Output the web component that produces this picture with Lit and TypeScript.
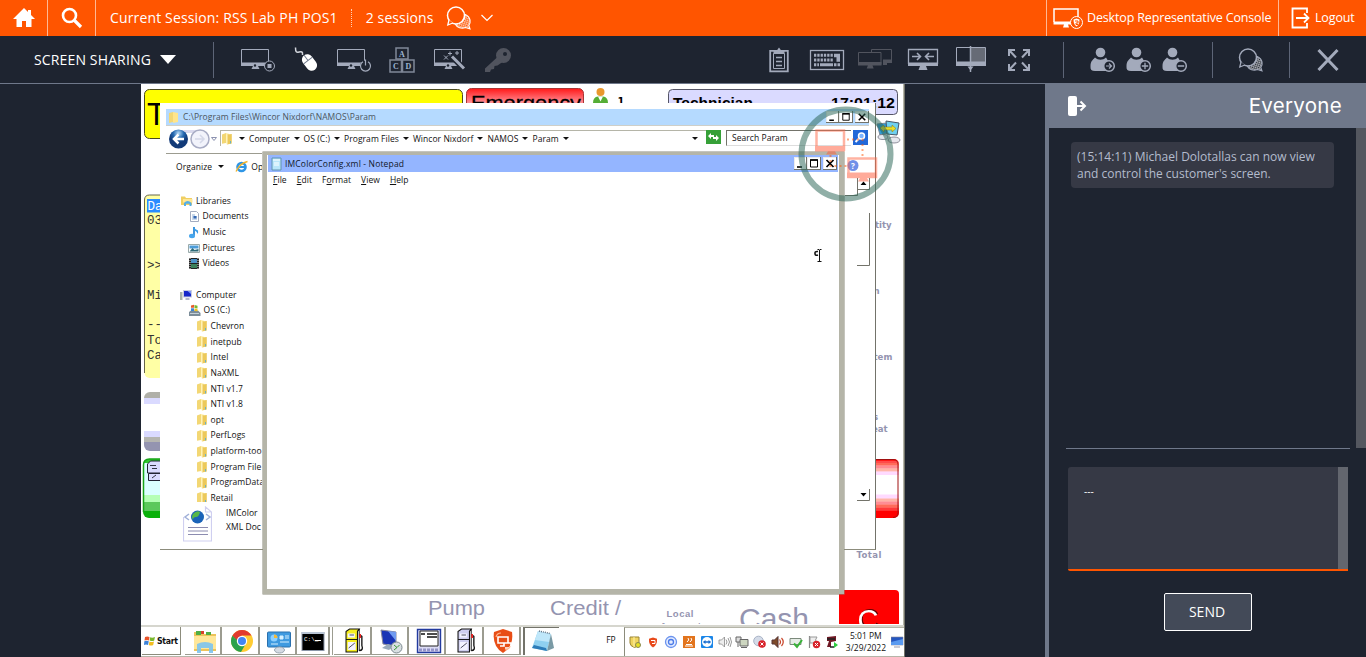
import { LitElement, html, svg, css } from "lit";
import { customElement } from "lit/decorators.js";

/* ---------- shared artwork ---------- */

const chat = svg`
  <circle cx="15" cy="11.500" r="8.500" fill="none" stroke="currentColor" stroke-width="1.500"/>
  <path d="M8 16l-1.200 5 5-2" fill="var(--bar)" stroke="currentColor" stroke-width="1.300"/>
  <path d="M24.300 10.500c6 3 5.500 8.500 3.500 11l1.200 3.500-4.500-1.500c-4 1.500-8.500 0-10-3 5-.5 9.500-4 9.800-10z" fill="var(--bar)"/>
  <path d="M24.300 10.500c6 3 5.500 8.500 3.500 11l1.200 3.500-4.500-1.500c-4 1.500-8.500 0-10-3 5-.5 9.500-4 9.800-10z" fill="url(#mesh)" stroke="currentColor" stroke-width="1.100"/>`;

const mesh = svg`<defs><pattern id="mesh" width="2" height="2" patternUnits="userSpaceOnUse" patternTransform="rotate(20)">
  <path d="M0 .5h2M.5 0v2" stroke="#fff" stroke-width=".6" opacity=".75"/></pattern></defs>`;

const monitor = svg`<path d="M1.500 18V3.500H28.500V18" fill="none" stroke="currentColor"/>
  <path d="M1 16.500h28v3.500H18l1.500 3h-8l1.500-3H1z" fill="currentColor"/>
  <circle cx="15" cy="19.500" r="1.200" fill="#1e2430"/>`;

const person = svg`<circle cx="13" cy="6.500" r="4.800" fill="currentColor"/>
  <path d="M7.500 11.500c3 3 8 3 11 0l3 5v8.500h-14q-5 0-4.500-4.500c0-5 2-6.500 4.500-9z" fill="currentColor"/>
  <circle cx="21.500" cy="20" r="5.300" fill="#1e2430" stroke="currentColor" stroke-width="1.500"/>`;

const icon = (art: unknown, cls = "") =>
  html`<svg class="ico ${cls}" width="36" height="28" viewBox="0 0 36 28">${mesh}${art}</svg>`;

const leftTools = [
  icon(svg`${monitor}<circle cx="29.500" cy="20" r="5" fill="#1e2430" stroke="currentColor"/><rect x="27.500" y="18" width="4" height="4" fill="currentColor"/>`),
  icon(svg`<path d="M7.500 1.500c0 5 1 5 3.500 4.500s4-.5 3.500 3" fill="none" stroke="#d3d6dd" stroke-width="1.500"/>
    <g transform="translate(1.500 -.5) rotate(-37 20 17)"><rect x="14.500" y="8" width="11" height="18" rx="5.500" fill="#fff"/><path d="M14.500 14.500h11M20 8v6.500" stroke="#6f788a"/></g>`),
  icon(svg`${monitor}<circle cx="29.500" cy="20" r="5.500" fill="#1e2430"/><path d="M27 15.700a5 5 0 1 0 5 0M29.500 13.500v6" fill="none" stroke="currentColor" stroke-width="1.200"/>`),
  icon(svg`<g fill="none" stroke="#808898" stroke-width="1.500"><rect x="12" y="2" width="12" height="11"/><rect x="6" y="14" width="11.500" height="12"/><rect x="18.500" y="14" width="11.500" height="12"/></g>
    <g class="blk" text-anchor="middle"><text x="18" y="10.500">A</text><text x="11.800" y="23">C</text><text x="24.300" y="23">D</text></g>`),
  icon(svg`<g transform="translate(1 0)">${monitor}</g><path d="M18 8l14 15" stroke="#1e2430" stroke-width="6"/><path d="M20 10.500l12 12" stroke="currentColor" stroke-width="3"/>
    <path d="M12 9.500l4 4m0-4l-4 4M18 5.500v4m-2-2h4M25 5v4m-2-2h4" stroke="currentColor"/>`),
  icon(svg`<circle cx="23.500" cy="9.500" r="7.500" fill="#51545e"/><circle cx="25" cy="8" r="2" fill="#1e2430"/>
    <path d="M17.500 11L5 22.500V26h5l1-2.500 3-.5.500-3 3-.5L22.500 16z" fill="#51545e"/>`),
];

const rightTools = [
  icon(svg`<path d="M9.200 4.800h17.600v20.500H9.200z" fill="none" stroke="currentColor" stroke-width="1.800"/>
    <path d="M12.500 7.500h11v15h-11z" fill="#1e2430" stroke="currentColor"/>
    <path d="M12.500 7.500V5h3L18 1.500 20.500 5h3v2.500z" fill="currentColor"/><path d="M15 11.500h6M15 15.500h6M15 19.500h6" stroke="currentColor" stroke-width="1.300"/>`),
  icon(svg`<rect x="1.500" y="4.500" width="33" height="19" fill="none" stroke="currentColor" stroke-width="1.300"/>
    <path d="M5 9.200h19M5 14h19M5 18.800h5" stroke="currentColor" stroke-width="3" stroke-dasharray="2.300 1"/>
    <path d="M25 7.700h6v8h-3.500v-4.500H25zM11 17.300h13v3H11zM25 17.300h2.500v3H25zM28.500 17.300h2.500v3h-2.500z" fill="currentColor"/>`),
  icon(svg`<g stroke="#51545e" fill="none"><path d="M14.500 6V3.500h20v12.500H26"/><path d="M1.500 6.500h22.500v12H1.500z"/></g><path d="M1 16h23.500v3.500h-9l1.200 3h-7l1.200-3H1zM26 13.500h9v3.500h-5v2h-4z" fill="#51545e"/>`),
  icon(svg`<path d="M3.500 18V3.500h29V18" fill="none" stroke="currentColor" stroke-width="1.300"/><path d="M3 16.500h30V20H21l1.500 4h-9l1.500-4H3z" fill="currentColor"/>
    <path d="M7 10.500h8M12 7l3.500 3.500L12 14M29 10.500h-8M24 7l-3.500 3.500L24 14" fill="none" stroke="currentColor" stroke-width="1.600"/>`),
  icon(svg`<path d="M3.500 17V1.500h29V17" fill="none" stroke="currentColor"/><path d="M17.500 2H32v14H17.500z" fill="#666b76"/><path d="M3 15.500h30V20H3z" fill="currentColor"/><path d="M17.500 0v26" stroke="currentColor" stroke-width="1.500"/><path d="M14.500 20.500h6l-3 4z" fill="currentColor"/>`),
  icon(svg`<g fill="none" stroke="currentColor" stroke-width="2"><path d="M8 10V4h6M8 4l7 7.500M22 4h6v6M28 4l-7 7.500M8 18v6h6M8 24l7-7.500M28 18v6h-6M28 24l-7-7.500"/></g>`),
];

const people = [
  icon(svg`<g transform="translate(3.500 0)">${person}<path d="M18.500 20h5.500M21.500 17.500l2.500 2.500-2.500 2.500" fill="none" stroke="currentColor" stroke-width="1.200"/></g>`),
  icon(svg`<g transform="translate(3.500 0)">${person}<path d="M18.300 20h6.400M21.500 16.800v6.400" stroke="currentColor" stroke-width="1.300"/></g>`),
  icon(svg`<g transform="translate(3.500 0)">${person}<path d="M18.300 20h6.400" stroke="currentColor" stroke-width="1.500"/></g>`),
];

/* ---------- remote desktop ---------- */

const folder = html`<svg class="fi" width="12" height="13" viewBox="0 0 12 13">
  <path d="M1 2.500l4-1.500v10l-4 .8z" fill="#f3d774"/><path d="M5 1l3 .8v9L5 11.500z" fill="#fff0a6"/><path d="M6 2.500l4.800-.5v9.500L6 12.500z" fill="#ecc95a"/><path d="M6 2.500v10" stroke="#fff6c8"/><path d="M9.500 9v2.500" stroke="#6bb1c4"/></svg>`;

const treeIcon: Record<string, unknown> = {
  lib: html`<svg class="fi" width="13" height="12"><path d="M1 1.500h4l1 1.500h6v7H1z" fill="#f0cf62"/><path d="M3 4h9.500v3.500H3z" fill="#ffe794"/><path d="M4 11V8q3.500-4 7.500 0v3h-2V8.800H6V11z" fill="#53aee8"/></svg>`,
  doc: html`<svg class="fi" width="12" height="13"><path d="M2.500 1.500h6l2 2v8h-8z" fill="#fff" stroke="#a3acc0"/><path d="M4 5h3M4 7h5M4 9h5" stroke="#8fb0d8"/><path d="M5.500 6h3v2.500h-3z" fill="#3569b4"/></svg>`,
  music: html`<svg class="fi" width="12" height="13"><path d="M6 1v8.500" stroke="#2d8ad8" stroke-width="1.800"/><path d="M6 1q1 3 4 3.500.5 2-.5 3.500Q9 5 6 4.500z" fill="#3b9ce6"/><ellipse cx="4" cy="10" rx="3" ry="2.200" fill="#46a5ec"/></svg>`,
  pic: html`<svg class="fi" width="12" height="12"><path d="M.5 2.500h11v8H.5z" fill="#fff" stroke="#9aa"/><path d="M1.500 3.500h9v3h-9z" fill="#4a9bd8"/><path d="M1.500 9.500l3-3.500 2 2 4-1v2.500z" fill="#2c6a78"/></svg>`,
  vid: html`<svg class="fi" width="12" height="13"><path d="M1 1h10v11H1z" fill="#222"/><path d="M3 2h6v4H3z" fill="#4c93c9"/><path d="M3 7h6v4H3z" fill="#3a7f5a"/><path d="M2 1v11M10 1v11" stroke="#ddd" stroke-dasharray="1 1"/></svg>`,
  pc: html`<svg class="fi" width="13" height="12"><path d="M0 3h2.500v8H0z" fill="#a9b3a9"/><path d="M3 1h9v7.500H3z" fill="#c8cce0"/><path d="M4 2h7v5.500H4z" fill="#1526c9"/><path d="M7.500 2H11v3z" fill="#7d9af5"/><path d="M5.500 9h4v2h-4z" fill="#b3b8cc"/></svg>`,
  drive: html`<svg class="fi" width="13" height="13"><path d="M1 8l2-1.500h7L12.500 9v3H1z" fill="#7c8d99"/><path d="M2 9.500h9" stroke="#c4d0d8"/><path d="M3 1.500l3-.8v3H3z" fill="#e8592b"/><path d="M6.500 1l3 .8v2.800l-3-.6z" fill="#79b92f"/><path d="M3 4.300h3V7H3z" fill="#3b86d6"/><path d="M6.500 4.500l3 .5v2.300l-3-.3z" fill="#f3c11f"/></svg>`,
  fold: folder,
};

const tree: [string, number, string][] = [
  ["lib", 0, "Libraries"], ["doc", 1, "Documents"], ["music", 1, "Music"], ["pic", 1, "Pictures"], ["vid", 1, "Videos"],
  ["", 0, ""],
  ["pc", 0, "Computer"], ["drive", 1, "OS (C:)"],
  ...["Chevron", "inetpub", "Intel", "NaXML", "NTI v1.7", "NTI v1.8", "opt", "PerfLogs", "platform-too", "Program File", "ProgramData", "Retail"]
    .map((n) => ["fold", 2, n] as [string, number, string]),
];

const winButtons = html`<span class="wb">
  <svg width="13" height="13" viewBox="0 0 13 13"><path d="M3 10h5" stroke="#000" stroke-width="1.600"/></svg>
  <svg width="14" height="13" viewBox="0 0 14 13"><path d="M3.500 3h7v7h-7z" fill="none" stroke="#000"/><path d="M3 3h8" stroke="#000" stroke-width="1.600"/></svg></span>
  <span class="wb"><svg width="14" height="13" viewBox="0 0 14 13"><path d="M3.500 3l7 7m0-7l-7 7" stroke="#000" stroke-width="1.700"/></svg></span>`;

const ledge = (x: number, w: number, y: number, rows: [number, string][]) => {
  let top = y;
  return rows.map(([h, c]) => {
    const r = svg`<rect x=${x} y=${top} width=${w} height=${h + 0.3} fill=${c}/>`;
    top += h;
    return r;
  });
};

const posScreen = html`<svg class="pos" width="764" height="573" viewBox="141 84 764 573">
  <defs>
    <clipPath id="bar"><path d="M141 84h764v540H141z"/></clipPath>
    <clipPath id="redR"><rect x="860" y="459" width="39" height="59" rx="5"/></clipPath>
    <clipPath id="grn"><rect x="143" y="459" width="40" height="59" rx="6"/></clipPath>
    <clipPath id="gry"><rect x="144" y="392" width="40" height="59" rx="6"/></clipPath>
    <linearGradient id="em" x2="0" y2="1"><stop offset="0" stop-color="#ff1818"/><stop offset=".35" stop-color="#ff8c94"/><stop offset="1" stop-color="#fff"/></linearGradient>
  </defs>
  <path d="M903.500 84v573" stroke="#b5b5a8"/><path d="M904.500 84v573" stroke="#73736a"/>
  <rect x="144.500" y="89.500" width="318" height="49" rx="5" fill="#ff0" stroke="#4a4a20"/>
  <text x="147" y="124.500" class="a" font-size="31">T</text>
  <rect x="466.500" y="88.500" width="117" height="40" rx="5" fill="url(#em)" stroke="#a33"/>
  <text x="471" y="109.500" class="a" font-size="20.500" textLength="110" lengthAdjust="spacingAndGlyphs" stroke="#000" stroke-width=".3">Emergency</text>
  <circle cx="600.500" cy="92" r="4" fill="#e9972d"/><path d="M593 103q0-6 5-6.500h5q5 .5 5 6.500z" fill="#55ad35"/><path d="M598 96.500l2.500 5 2.500-5z" fill="#fff"/>
  <text x="617.500" y="105" class="v b sm">1</text>
  <rect x="668.500" y="89.500" width="229" height="25" rx="4" fill="#dadaff" stroke="#555566"/>
  <text x="673" y="108" class="a b" font-size="15.500" textLength="80" lengthAdjust="spacingAndGlyphs">Technician</text>
  <text x="831" y="108" class="a b" font-size="15.500" textLength="64" lengthAdjust="spacingAndGlyphs">17:01:12</text>
  <g><path d="M877 124l10-1 1 10-8 2z" fill="#2f9bd8" stroke="#789"/><path d="M886 121l13 2-2 12-10-1z" fill="#6fd0f0" stroke="#456"/><path d="M880 128l4-3v2h8v-2l4 3.500-4 3.500v-2h-8v2z" fill="#e8dd2a" stroke="#8a7a10" stroke-width=".5"/><ellipse cx="883" cy="137" rx="5" ry="2.500" fill="#e6e8ee" stroke="#667" stroke-width=".7"/><ellipse cx="894" cy="140" rx="6" ry="3" fill="#e6e8ee" stroke="#667" stroke-width=".7"/></g>

  <rect x="144.500" y="195" width="40" height="183" rx="5" fill="#ffffa5"/><path d="M144.500 373V200q0-5 5-5H184" fill="none" stroke="#66664a"/>
  <rect x="147" y="199" width="20" height="13.500" fill="#2a8cff"/>
  <g class="m" font-size="12.500" fill="#333"><text x="147.500" y="209.500" fill="#fff">Da</text><text x="147" y="224">03</text><text x="147" y="269">&gt;&gt;</text><text x="147" y="298.500">Mi</text><text x="147" y="328">--</text><text x="147" y="343.500">To</text><text x="147" y="358.500">Ca</text></g>
  <g clip-path="url(#gry)">${ledge(144, 30, 392, [[6, "#b0b0a8"], [6, "#dadaff"], [27, "#fff"], [6, "#dadaff"], [5, "#b5b5b0"], [10, "#9494b0"]])}</g>
  <g clip-path="url(#grn)">${ledge(143, 30, 459, [[4, "#2fc82f"], [32, "#daffff"], [7, "#b5ffb5"], [9, "#5cc85c"], [8, "#0ab00a"]])}</g>
  <path d="M143.500 512V465q0-6 6-6h12" fill="none" stroke="#17a517" stroke-width="1.500"/>
  <g stroke="#223" fill="#dadaff"><path d="M147.500 464l3-3h10v12h-13z"/><path d="M148.500 473.500h12v7h-12z"/></g><path d="M150 465.500h6M152 468.500h5M152 478l4-3" stroke="#334"/>

  <g class="v b" fill="#9494b0"><text x="875" y="227.500">tity</text><text x="873.500" y="293.500">n</text><text x="873.500" y="360">tem</text><text x="873" y="419.500">s</text><text x="872" y="431.500">eat</text><text x="856.500" y="557.500" textLength="25">Total</text></g>
  <g clip-path="url(#redR)">${ledge(860, 40, 459, [[2, "#ff1818"], [2, "#ff4a4a"], [2.5, "#ff6b5a"], [3, "#ff8c94"], [3, "#ffb5a8"], [3.5, "#ffdaff"], [19.5, "#fff"], [4, "#ffdaff"], [3, "#ffb5a8"], [3, "#ff8c94"], [3, "#ff6b5a"], [3, "#ff3a3a"], [8, "#f00"]])}</g>
  <path d="M876 459.500h17q5 0 5 5v48q0 5-5 5" fill="none" stroke="#a01010"/>

  <g clip-path="url(#bar)"><g class="a" fill="#9494b0">
    <text x="428" y="615" font-size="21" textLength="57" lengthAdjust="spacingAndGlyphs">Pump</text>
    <text x="550" y="615" font-size="21" textLength="71" lengthAdjust="spacingAndGlyphs">Credit /</text>
    <text x="666.500" y="617" font-size="9.500" class="b" textLength="27">Local</text>
    <text x="660" y="628.500" font-size="9.500" class="b" textLength="41">Account</text>
    <text x="739" y="629" font-size="29" textLength="70" lengthAdjust="spacingAndGlyphs">Cash</text></g>
    <rect x="839" y="590" width="60" height="60" rx="4" fill="#f00"/>
    <text x="857.500" y="629.500" font-size="29" class="a glow" fill="#fff">C</text></g>
</svg>`;

const task = (art: unknown, cls = "") => html`<div class="task ${cls}"><svg width="26" height="26" viewBox="0 0 26 26">${art}</svg></div>`;

const pump = (c: string) => svg`<g transform="translate(1.500 0) scale(.88 1)"><path d="M4 3.500L8 1h11l-2 2.500V24H4z" fill="${c}" stroke="#111" stroke-width="1.200"/><path d="M4 11.500h13M17 3.500L19 1v22" fill="none" stroke="#111"/><path d="M6 5.500h8v4H6zM6 14h9v8H6z" fill="#f4f4ff"/><path d="M8 7h5M7 20l7-5" stroke="#445"/><path d="M19 6.500l3 2v9q2 5-3 5" fill="none" stroke="#111" stroke-width="1.500"/><path d="M20 6v4" stroke="#e22" stroke-width="2"/></g>`;

const tasksA = [
  task(svg`<path d="M2 4h8l2 2h12v17H2z" fill="#edc35a"/><path d="M4 3h5v4H4zM14 4h5v3h-5z" fill="#4fae45"/><path d="M9 3h3v3H9z" fill="#d8412b"/><path d="M2 8h22v13H2z" fill="#ffe79a"/><path d="M5 25v-9q8-4 16 0v9h-4v-5H9v5z" fill="#7cc3f0" opacity=".9"/>`),
  task(svg`<circle cx="13" cy="13" r="11" fill="#fc3"/><path d="M3.500 7.500A11 11 0 0 0 12 24l5-8.500-8 0z" fill="#2ba24c"/><path d="M3.500 7.500l5 8h4V9z" fill="#2ba24c"/><path d="M3.500 7.500A11 11 0 0 1 22.500 7.500H13L8 12z" fill="#e23b2e"/><circle cx="13" cy="13" r="5.200" fill="#fff"/><circle cx="13" cy="13" r="4" fill="#4285f4"/>`),
  task(svg`<rect x="1.500" y="4" width="23" height="15" rx="1" fill="#3f9ae0" stroke="#2a70ad"/><circle cx="8" cy="10" r="3.500" fill="#8ed0ff"/><path d="M8 10V6.500A3.500 3.500 0 0 1 11.500 10z" fill="#f2b93a"/><path d="M14 8h3v3h-3zM19 8h4M19 10h4M14 14h9" fill="#d6f0ff" stroke="#d6f0ff"/><path d="M5 16h7" stroke="#d6f0ff"/><ellipse cx="13.500" cy="22" rx="5" ry="3" fill="#d5dbe3" stroke="#9aa6b2"/>`),
  task(svg`<rect x="2" y="4.500" width="22" height="18" fill="#000" stroke="#8b96a8"/><path d="M2 5h22" stroke="#b8c4d4" stroke-width="2"/><text x="4" y="13" font-size="6" fill="#fff" class="m">C:\\_</text><path d="M15 12.500h6" stroke="#fff"/>`),
];
const tasksB = [
  task(svg`${pump("#f6ee20")}`),
  task(svg`<path d="M3 2l15 2v14L5 16z" fill="#1a35b5" stroke="#889"/><path d="M10 3l8 1v9z" fill="#6f9af0"/><path d="M4 20l6-4 6 2-5 4z" fill="#9ab"/><circle cx="18.500" cy="19.500" r="5.500" fill="#d9dfe2" stroke="#7d8a90"/><path d="M16 17l3 2.500-3 2.500M21.500 17L19 19.500" fill="none" stroke="#3a9b3a"/>`),
  task(svg`<path d="M1.500 1.500h23v23h-23z" fill="#dcdcf5" stroke="#223a9e" stroke-width="1.400"/><path d="M4 3h18v15H4z" fill="#fff" stroke="#222"/><path d="M5 6h4M11 6h10M11 9h10" stroke="#111" stroke-width="1.600"/><path d="M3 22h20" stroke="#9494c8" stroke-width="3" stroke-dasharray="3 1"/>`),
  task(svg`${pump("#cfcff0")}`),
  task(svg`<path d="M13 1l9 3q2 14-9 21Q2 18 4 4z" fill="#e84e16"/><path d="M8 9h10v6H8zM10 18h4v-3h7v5h-6" fill="none" stroke="#fff" stroke-width="1.600"/><path d="M6 9q1-4 5-4M15 22q5-1 5-4" fill="none" stroke="#ffb48c" stroke-width="1.200"/>`),
  task(svg`<path d="M9 3l13 3-4 17-15-3z" fill="#8fd0f0"/><path d="M9 3l13 3-2 8-14-2z" fill="#bfe7fa"/><path d="M3 20l15 3-1-3L5 17z" fill="#2d7cb8"/><path d="M22 6l3 14-7 3z" fill="#7a9aa5"/><path d="M10 3l11 2.500" stroke="#678" stroke-dasharray="1 1" stroke-width="1.500"/>`, "on"),
];

const tray = [
  svg`<path d="M2 2h9v7q-4 4-4.500 3.500Q2 11 2 8z" fill="#f0d460" stroke="#9a8430"/><path d="M6 2v10" stroke="#fff2a8"/><circle cx="10" cy="10" r="2.500" fill="#e8e020" stroke="#885"/>`,
  svg`<path d="M7 2.500l4 1.300q.5 6-4 8.700Q2.500 9.800 3 3.800z" fill="#e8491a"/><path d="M5 5.500h4v3H6" fill="none" stroke="#fff"/>`,
  svg`<circle cx="7" cy="7" r="5.500" fill="#e4ecff" stroke="#6b93ee" stroke-width="1.300"/><circle cx="7" cy="7" r="2.500" fill="none" stroke="#4b7be8" stroke-width="1.300"/>`,
  svg`<path d="M1 1h12v12H1z" fill="#e2741d"/><path d="M3 11h8M4 9.500h6M5 7q3-2 1-4M8 7q3-2 1-4" stroke="#fff" fill="none"/>`,
  svg`<rect x="1" y="1" width="12" height="12" rx="1" fill="#1b86e8"/><circle cx="7" cy="7" r="5" fill="#fff"/><path d="M2.800 7L5.500 5v1.300h3V5l2.700 2-2.700 2V7.700h-3V9z" fill="#1b6fd0"/>`,
  svg`<path d="M1 5h2.500L6.500 2v10L3.500 9H1z" fill="#eee" stroke="#888" stroke-width=".8"/><path d="M8 4.500q2 2.500 0 5M10 3q3 4 0 8M12 2q3 5 0 10" fill="none" stroke="#999"/>`,
  svg`<path d="M1 2h5v5H1z" fill="#ddd" stroke="#666"/><path d="M5 4.500h8V11H5z" fill="#cdd6c0" stroke="#666"/><path d="M3 7v5M6 12.500h6" stroke="#666"/>`,
  svg`<circle cx="5.500" cy="6" r="4.800" fill="#d4dbe8" stroke="#a9b3c6"/><circle cx="9" cy="9" r="3.800" fill="#d8232a"/><path d="M7.500 7.500l3 3m0-3l-3 3" stroke="#fff"/>`,
  svg`<path d="M1 5h2.500L7 1.500v11L3.500 9H1z" fill="#7d4a2a" stroke="#533"/><path d="M8.500 4.500q2 2.500 0 5M10.500 3q3.500 4 0 8" fill="none" stroke="#c8452a" stroke-width="1.200"/>`,
  svg`<path d="M1 3.500h11v6H1z" fill="#e6ede6" stroke="#7c8a7c"/><path d="M5 8.500l3 3.500 5-7" fill="none" stroke="#37b337" stroke-width="2"/>`,
  svg`<path d="M2.500 1v12" stroke="#888" stroke-width="1.200"/><path d="M3 2h7l-1.500 3L10 8H3z" fill="#eee" stroke="#999"/><circle cx="9.500" cy="9.500" r="3.700" fill="#d8232a"/><path d="M8 8l3 3m0-3l-3 3" stroke="#fff"/>`,
  svg`<path d="M2 2l9-1v5l-5 1v5H2l2-6H2z" fill="#701824"/><path d="M2 4h8M5 12h4" stroke="#222" stroke-width="1.500"/><path d="M9 7l4 3-4 3z" fill="#2ecc40"/>`,
];

@customElement("remote-desktop")
class RemoteDesktop extends LitElement {
  static styles = css`
    :host { display: block; position: relative; width: 764px; height: 573px; background: #fff; overflow: hidden; font: 8.5px/12px "Open Sans", sans-serif; letter-spacing: .06px; color: #111; }
    svg { display: block; flex: none; }
    .pos { position: absolute; inset: 0; letter-spacing: 0; }
    .a { font-family: "Liberation Sans", sans-serif; }
    .v { font-family: "DejaVu Sans Condensed", "DejaVu Sans", sans-serif; font-size: 9.5px; }
    .sm { font-size: 11px; }
    .b { font-weight: bold; }
    .m { font-family: "Liberation Mono", monospace; }
    .glow { filter: drop-shadow(1px -1px 0 #600); }
    .explorer { position: absolute; left: 19px; top: 19px; width: 716px; height: 447px; box-sizing: border-box; background: #fff; border-right: 1px solid #73736a; border-bottom: 1px solid #8c8c7c; overflow: hidden; padding: 6px 6px 0 6px; }
    .title { display: flex; align-items: center; height: 16px; background: #b5daff; color: #4c5560; }
    .title span.name { flex: 1; }
    .wb { display: flex; margin-left: 2px; }
    .wb svg { background: #fff; box-shadow: inset -1px -1px #73736a, inset 1px 1px #ececec; height: 12px; }
    .nav { display: flex; height: 27px; border-top: 1px solid #cfcfc8; }
    .addr { display: flex; flex: none; align-items: center; width: 486px; height: 16px; margin-top: 4px; border-top: 1px solid #b5b5a8; border-left: 1px solid #b5b5a8; box-sizing: border-box; white-space: nowrap; }
    .addr > svg { margin-right: 2px; }
    .addr .drop { margin-right: 8px; }
    .tri { width: 0; border: 3px solid transparent; border-top: 3px solid #111; border-bottom: 0; margin: 0 4px; flex: none; }
    .grow { flex: 1; }
    .go { margin-top: 4px; }
    .search { flex: none; width: 125px; height: 16px; margin: 4px 2px 0 5px; border: 1px solid #73736a; border-right: 0; border-bottom-color: #ddd; box-sizing: border-box; padding-left: 5px; line-height: 14px; }
    .cmds { display: flex; align-items: center; width: 96px; height: 26px; border-top: 1px solid #9c9c90; padding-left: 10px; box-sizing: border-box; overflow: hidden; white-space: nowrap; }
    .cmds .tri { margin: 0 11px 0 6px; }
    .tree { height: 309px; margin-top: 14px; padding-left: 14px; width: 82px; overflow: hidden; white-space: nowrap; }
    .row { display: flex; align-items: center; height: 15.65px; gap: 3px; }
    .l1 { padding-left: 7.5px; } .l2 { padding-left: 15.5px; }
    .details { display: flex; gap: 14px; padding: 4px 0 0 17px; white-space: nowrap; overflow: hidden; width: 79px; line-height: 14px; }
    .edge { position: absolute; left: 690px; top: 74px; }
    .notepad { position: absolute; left: 122px; top: 68px; width: 581px; height: 442px; box-sizing: border-box; background: #fff; border: solid #b5b5a8; border-width: 3px 5px 5px 4px; box-shadow: inset 1px 1px #fff, 0 0 0 .5px #8c8c7c; padding-left: 1px; }
    .notepad .title { background: #94b5ff; color: #101828; margin-right: 1px; height: 17px; letter-spacing: .16px; padding-right: 1px; }
    .notepad .wb svg { height: 13px; }
    .menu { display: flex; gap: 10px; padding: 1px 5px; line-height: 13px; }
    .over { position: absolute; inset: 0; }
    .bar { position: absolute; left: 0; right: 1px; bottom: 0; height: 32px; box-sizing: border-box; display: flex; background: #fff; border-top: 2px solid #d6d6ce; border-bottom: 1px solid #b5b5a8; letter-spacing: 0; }
    .start { display: flex; flex: none; align-items: center; gap: 1px; width: 39px; padding-left: 2px; margin-left: 1px; box-sizing: border-box; font: bold 8.7px/12px "DejaVu Sans Condensed", "DejaVu Sans", sans-serif; letter-spacing: -.3px; border-right: 1px solid #8c8c7c; border-bottom: 1px solid #8c8c7c; margin-bottom: 1px; }
    .group { display: flex; flex: none; }
    .ga { margin-left: 4px; } .gb { margin-left: 4px; }
    .task { width: 37.4px; box-sizing: border-box; padding: 1px 0 0 4px; display: flex; justify-content: center; border-right: 2px solid #9c9c90; border-bottom: 1px solid #9c9c90; margin-bottom: 1px; }
    .on { width: 36px; border: 0; border-left: 2px solid #73736a; border-top: 1px solid #73736a; margin-left: 2px; padding: 0; }
    .ga .task:last-child { width: 33px; padding-left: 1px; box-shadow: 2px 0 #fff, 3px 0 #9c9c90; }
    .fp { flex: none; margin-left: 47px; padding-top: 7px; width: 18px; }
    .tray { display: flex; flex: 1; align-items: center; border-left: 1px solid #8c8c7c; border-top: 1px solid #b5b5a8; padding-left: 3px; }
    .tray > svg { margin-right: 3.9px; }
    .clock { flex: none; width: 43px; text-align: center; line-height: 12.5px; padding-left: 3px; box-sizing: border-box; }
    .tray > svg.show { margin: 0 0 0 5px; }
  `;

  render() {
    const crumbs = ["Computer", "OS (C:)", "Program Files", "Wincor Nixdorf", "NAMOS", "Param"];
    return html`${posScreen}
      <div class="explorer">
        <div class="title"><svg width="17" height="14" viewBox="-2 0 17 14"><path d="M1 3l4-1v10l-4 1z" fill="#f3d774"/><path d="M5 2l5 1v9l-5 1z" fill="#ffe58c"/></svg>
          <span class="name">C:\\Program Files\\Wincor Nixdorf\\NAMOS\\Param</span>${winButtons}</div>
        <div class="nav">
          <svg width="54" height="26" viewBox="0 0 54 26"><defs><radialGradient id="bk" cy=".2"><stop stop-color="#b8dcf8"/><stop offset=".55" stop-color="#2468b0"/><stop offset="1" stop-color="#123a78"/></radialGradient></defs>
            <path d="M12 4h22v3H12z" fill="#dadaee"/><circle cx="12.500" cy="13" r="9.500" fill="url(#bk)"/><path d="M18 13H8M12.500 8.500L8 13l4.500 4.500" fill="none" stroke="#fff" stroke-width="2.500"/>
            <circle cx="34" cy="13" r="9" fill="#f2f3fb" stroke="#a8acc4" stroke-width="1.500"/><path d="M29 13h8M34 9l4 4-4 4" fill="none" stroke="#d4d8e8" stroke-width="1.500"/><path d="M45.500 11.500h5l-2.500 3z" fill="#fff" stroke="#8c92b0"/></svg>
          <div class="addr">${folder}<i class="tri"></i>${crumbs.map((c) => html`<span>${c}</span><i class="tri"></i>`)}<span class="grow"></span><i class="tri drop"></i></div>
          <svg class="go" width="15" height="14" viewBox="0 0 15 14"><path d="M0 0h15v14H0z" fill="#36a038"/><path d="M2 6l3-3v2h3v2H5v2zM13 8l-3 3V9H7V7h3V5z" fill="#fff"/></svg>
          <div class="search">Search Param</div>
          <svg class="go" width="16" height="15" viewBox="0 0 16 15"><path d="M0 0h15v15H0z" fill="#2268d8"/><circle cx="8.500" cy="6" r="3" fill="#7db4ff" stroke="#fff" stroke-width="1.500"/><path d="M6 8.500L2.500 12" stroke="#fff" stroke-width="2"/></svg>
        </div>
        <div class="cmds">Organize<i class="tri"></i><svg width="14" height="13" viewBox="0 0 14 13"><circle cx="6.500" cy="7" r="4" fill="none" stroke="#2f96e6" stroke-width="2.600"/><path d="M3 7h8" stroke="#2f96e6" stroke-width="2"/><path d="M1 11.500Q5 3 12.500 1.500" fill="none" stroke="#f2b42c" stroke-width="1.300"/></svg>&nbsp;Op</div>
        <div class="tree">${tree.map(([k, lv, n]) => html`<div class="row l${lv}">${k ? treeIcon[k] : ""}<span>${n}</span></div>`)}</div>
        <div class="details"><svg width="29" height="36" viewBox="0 0 29 36"><path d="M.5 11v24h28V6l-6-5v5h5" fill="none" stroke="#cfcff0" stroke-width="1.200"/><path d="M5 21.500h20M5 25h20M5 28.500h20" stroke="#8c8cb0"/><circle cx="14.500" cy="11" r="6.500" fill="#1a63b8"/><path d="M10 8q4-4 7-2-1 5-4 5t-3 3q-2-3 0-6z" fill="#58b848"/><path d="M6 8l-4 3 4 3M23 8l4 3-4 3" fill="none" stroke="#a0b0d8" stroke-width="1.500"/></svg><div>IMColor<br>XML Doc</div></div>
        <svg class="edge" width="24" height="330" viewBox="850 177 24 330"><path d="M869.500 178v11.500H857M869.500 213v52.500H857M869.500 489v11.500H857" fill="none" stroke="#73736a"/><path d="M860.500 185h6l-3-3.500zM860.500 493h6l-3 3.500z" fill="#000"/></svg>
      </div>
      <div class="notepad">
        <div class="title"><svg width="17" height="14" viewBox="1 0 17 14"><path d="M5 1h9v12H5z" fill="#b9e6fa" stroke="#5f93b0"/><path d="M6 3h7M7 6h5M7 8h5" stroke="#fff"/></svg><span class="name">IMColorConfig.xml - Notepad</span>${winButtons}</div>
        <div class="menu"><span><u>F</u>ile</span><span><u>E</u>dit</span><span>F<u>o</u>rmat</span><span><u>V</u>iew</span><span><u>H</u>elp</span></div>
      </div>
      <svg class="over" width="764" height="573" viewBox="141 84 764 573">
        <path d="M845 195.500h12.500V178" fill="none" stroke="#73736a"/><circle cx="853" cy="165.500" r="5.500" fill="#6f8fe8"/><text x="851" y="168.500" font-size="8" fill="#fff" class="b">?</text>
        <circle cx="846" cy="154" r="44.500" fill="none" stroke="#2a6656" stroke-width="6" opacity=".52"/>
        <g opacity=".5"><path d="M816.500 130.500h27.500v19h-27.500z" fill="none" stroke="#ff6a48" stroke-width="2.500"/><path d="M815 146h30v5.500H835l2 3h-11l2-3H815z" fill="#ff5a38"/>
        <path d="M848.500 158.500H876v18.500h-27.500z" fill="none" stroke="#ff6a48" stroke-width="2.500"/><path d="M847 172.500h30v5.500H867l2 3.500h-11l2-3.500H847z" fill="#ff5a38"/>
        <path d="M847 139.500h15.500V157M830.500 155v11H847" fill="none" stroke="#ff5500" stroke-width="2" stroke-dasharray="2 3"/></g>
        <path d="M818 251.500q-3.500-.5-3 2.500.5 2 3 1" fill="none" stroke="#111" stroke-width="1.500"/><path d="M819.500 250v11M817.500 249.500h1.500l.5.500.5-.5h1.500M817.500 261.500h4" fill="none" stroke="#111"/>
      </svg>
      <div class="bar">
        <div class="start"><svg width="12" height="12" viewBox="0 0 12 12"><path d="M1 2q2-1 4.500 0L5 5.500Q3 4.500.5 5.500z" fill="#e8532a"/><path d="M6.200 2.300q2 1 4.800-.3l-.8 3.500q-2 1-4.500 0z" fill="#7ab82d"/><path d="M.3 6.300q2-1 4.500 0L4 10q-2-1-4 0z" fill="#3c82d8"/><path d="M5.500 6.500q2 1 4.500 0L9.200 10q-2 1-4.400 0z" fill="#f3bd1e"/></svg>Start</div>
        <div class="group ga">${tasksA}</div>
        <div class="group gb">${tasksB}</div>
        <div class="fp">FP</div>
        <div class="tray">${tray.map((t) => html`<svg width="14" height="14" viewBox="0 0 14 14">${t}</svg>`)}
          <div class="clock">5:01 PM<br>3/29/2022</div>
          <svg class="show" width="13" height="12" viewBox="0 0 13 12"><path d="M0 1h12v8H0z" fill="#2456c0" stroke="#889" stroke-width=".6"/><path d="M0 6l12-3v6H0z" fill="#5a9af0"/><path d="M3 11h6" stroke="#99a"/></svg></div>
      </div>`;
  }
}

@customElement("chat-panel")
class ChatPanel extends LitElement {
  static styles = css`
    :host { display: flex; flex-direction: column; width: 321px; box-sizing: border-box; border-left: 4px solid #6f788a; font-family: "Open Sans", sans-serif; color: #fff; }
    .head { display: flex; align-items: center; justify-content: space-between; height: 44px; padding: 0 24px 0 18px; background: #6f788a; font: 400 20.5px/44px Inter, sans-serif; letter-spacing: .3px; }
    .log { display: flex; justify-content: space-between; height: 320px; padding-left: 22px; }
    .msg { align-self: flex-start; width: 263px; height: 46px; box-sizing: border-box; margin-top: 14px; padding: 6px; border-radius: 4px; background: #363945; color: #b4bccd; font-size: 12px; line-height: 17px; white-space: nowrap; }
    .thumb { width: 10px; background: #54575f; }
    .rule { height: 1px; margin: 0 16px 0 17px; background: #6f788a; }
    .input { display: flex; justify-content: space-between; height: 104px; box-sizing: border-box; margin: 18px 18px 0 19px; background: #363945; border-bottom: 2px solid #ff5500; border-radius: 3px 0 0 2px; font-size: 10px; }
    .input span { padding: 15px 0 0 16px; line-height: 18px; }
    .bar { width: 10px; background: #63666e; }
    .send { width: 88px; height: 38px; margin: 22px 0 0 115px; border: 1px solid #fff; border-radius: 2px; background: #434a58; color: #fff; font: 14px "Open Sans", sans-serif; padding: 0 2px 1px 0; box-sizing: border-box; }
  `;
  render() {
    return html`
      <div class="head"><svg width="20" height="22" viewBox="0 0 20 22"><rect x="1" y="1" width="9" height="20" rx="2" fill="#fff"/><path d="M7 11h11M13.500 6.500L18 11l-4.500 4.500" fill="none" stroke="#fff" stroke-width="2"/></svg>Everyone</div>
      <div class="log"><div class="msg">(15:14:11) Michael Dolotallas can now view<br>and control the customer's screen.</div><div class="thumb"></div></div>
      <div class="rule"></div>
      <div class="input"><span>---</span><div class="bar"></div></div>
      <button class="send">SEND</button>`;
  }
}

@customElement("app-root")
class AppRoot extends LitElement {
  static styles = css`
    :host { display: flex; flex-direction: column; width: 1366px; height: 657px; overflow: hidden; background: #1e2430; color: #fff; font: 14px/20px "Open Sans", sans-serif; }
    svg { display: block; flex: none; }
    .top { display: flex; align-items: center; height: 36px; background: #ff5500; --bar: #ff5500; white-space: nowrap; }
    .cell { display: flex; align-items: center; justify-content: center; width: 47px; height: 36px; border-right: 1px solid #ffb894; }
    .session { margin-left: 14px; letter-spacing: .15px; }
    .count { letter-spacing: .1px; }
    .dots { height: 18px; border-left: 1px dotted #ffd0b8; margin: 0 14px 0 13px; }
    .top .chat { margin-left: 7px; }
    .top .chev { margin-left: 3px; }
    .grow { flex: 1; }
    .link { display: flex; align-items: center; box-sizing: border-box; height: 36px; border-left: 1px solid #ffb894; font-size: 12.5px; letter-spacing: -.15px; gap: 5px; }
    .console { width: 232px; padding-left: 6px; gap: 4px; }
    .logout { width: 88px; padding-left: 12px; }
    .tools { display: flex; align-items: center; height: 47px; border-bottom: 1px solid #6f788a; color: #a3aabb; --bar: #1e2430; }
    .mode { display: flex; align-items: center; gap: 9px; width: 179px; padding-left: 34px; color: #fff; letter-spacing: .14px; }
    .down { border: 8px solid transparent; border-top: 9px solid #fff; border-bottom: 0; }
    .sep { width: 1px; height: 36px; background: #5d6577; }
    .set { display: flex; }
    .set .ico { margin: 0 6px; }
    .set.tight .ico { margin: 0; }
    .s1 { margin-left: 20px; } .s2 { margin-right: 20px; } .s3 { margin: 0 20px; }
    .one { margin: 0 20px; } .x { margin: 0 20px; }
    .blk { font: bold 8px "Liberation Serif", serif; fill: #9fb4d0; }
    .main { display: flex; flex: 1; justify-content: space-between; padding-left: 141px; }
  `;
  render() {
    return html`
      <div class="top">
        <div class="cell"><svg width="24" height="22" viewBox="0 0 24 22"><path d="M12 1L1 12h3.500v8H10v-6h4v6h5.500v-8H23l-4-4V3h-3v2z" fill="#fff"/></svg></div>
        <div class="cell"><svg width="22" height="22" viewBox="0 0 22 22"><circle cx="8.500" cy="8.500" r="6.500" fill="none" stroke="#fff" stroke-width="2.600"/><path d="M13 13l7 7" stroke="#fff" stroke-width="3.200"/></svg></div>
        <span class="session">Current Session: RSS Lab PH POS1</span><i class="dots"></i><span class="count">2 sessions</span>
        ${icon(chat, "chat")}
        <svg class="chev" width="14" height="10" viewBox="0 0 14 10"><path d="M1.500 2L7 7.500 12.500 2" fill="none" stroke="#fff" stroke-width="1.200"/></svg>
        <span class="grow"></span>
        <div class="link console"><svg width="30" height="24" viewBox="0 0 30 24"><path d="M1 16V3h24v13" fill="none" stroke="#fff" stroke-width="1.500"/><path d="M.500 15.500h25v3H15l1 3h-6l1-3H.500z" fill="#fff"/><circle cx="23.500" cy="16.500" r="6" fill="#ff5500" stroke="#fff"/><path d="M20.500 13.500l3-1 3 1q0 5-3 7-3-2-3-7z" fill="#fff"/><path d="M22 15h3v2h-2v1.500h2" fill="none" stroke="#ff5500"/></svg>Desktop Representative Console</div>
        <div class="link logout"><svg width="19" height="22" viewBox="0 0 19 22"><path d="M16 6V1.500H1.500v19H16V16" fill="none" stroke="#fff" stroke-width="1.800"/><path d="M5 11h12M13 6.500l4.500 4.500-4.500 4.500" fill="none" stroke="#fff" stroke-width="1.800"/></svg>Logout</div>
      </div>
      <div class="tools">
        <div class="mode">SCREEN SHARING<i class="down"></i></div><i class="sep"></i>
        <div class="set s1">${leftTools}</div><span class="grow"></span>
        <div class="set s2">${rightTools}</div><i class="sep"></i>
        <div class="set tight s3">${people}</div><i class="sep"></i>
        <div class="one">${icon(chat)}</div><i class="sep"></i>
        <div class="x">${icon(svg`<path d="M8.500 4l19 20m0-20l-19 20" stroke="currentColor" stroke-width="3"/>`)}</div>
      </div>
      <div class="main"><remote-desktop></remote-desktop><chat-panel></chat-panel></div>`;
  }
}
